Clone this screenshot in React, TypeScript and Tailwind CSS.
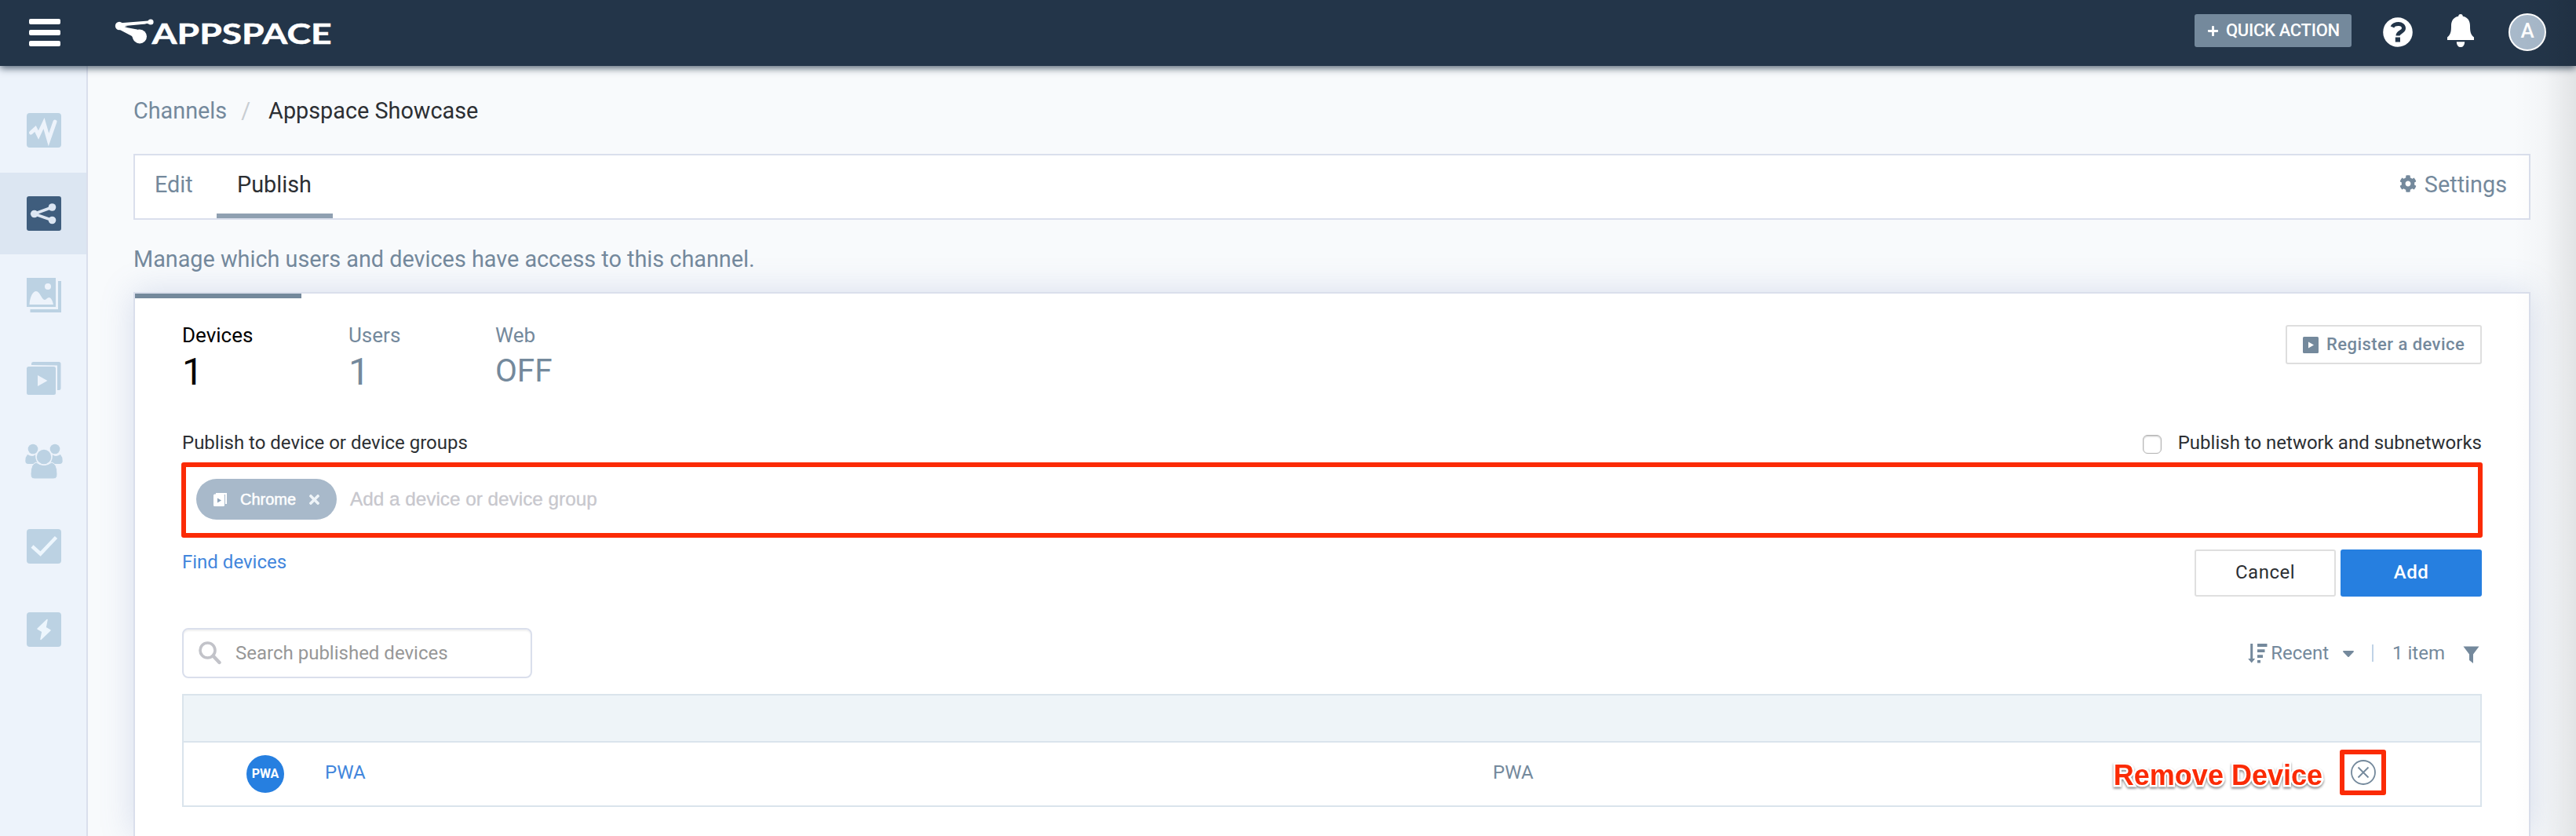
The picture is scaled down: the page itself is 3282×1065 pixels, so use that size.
import { useState } from 'react';
import type { ReactNode } from 'react';
import { FaCog, FaPlus, FaTimes, FaCaretDown } from 'react-icons/fa';

interface NavItem {
  id: string;
  icon: ReactNode;
}

interface Stat {
  id: string;
  label: string;
  value: string;
  className: string;
}

// Each icon is drawn inside a 110x104 sidebar cell
const navItems: NavItem[] = [
  {
    id: 'dashboard',
    icon: (
      <>
        <rect x="34" y="30" width="44" height="44" rx="4" fill="#bcd2e3" />
        <path d="M39.500 55 L45 50 L49 58 L56 43 L62 64 L70 41" fill="none" stroke="#edf3fb" strokeWidth="5" strokeLinecap="round" strokeMiterlimit="10" />
      </>
    ),
  },
  {
    id: 'channels',
    icon: (
      <>
        <rect x="34" y="30" width="44" height="44" rx="3" fill="#3f5d7d" />
        <path d="M66.500 44 L43.500 52.500 L66.500 60.500" fill="none" stroke="#dce6f2" strokeWidth="3.600" />
        <circle cx="66.500" cy="44" r="4.800" fill="#dce6f2" />
        <circle cx="43.800" cy="52.500" r="4.800" fill="#dce6f2" />
        <circle cx="66.500" cy="60.500" r="4.800" fill="#dce6f2" />
      </>
    ),
  },
  {
    id: 'library',
    icon: (
      <>
        <path d="M34 28h37v37H34z M74 32h4v40H38.500v-4H74z" fill="#bcd2e3" />
        <circle cx="61" cy="39" r="4" fill="#edf3fb" />
        <path d="M37.500 62 C38 52 42 45 46 45 C51 45 53 56 57 56 C59 56 60 53 62.500 53 C65 53 67 57 68 62 Z" fill="#edf3fb" />
      </>
    ),
  },
  {
    id: 'playlists',
    icon: (
      <>
        <path d="M40 33v-1.500a2.500 2.500 0 0 1 2.500-2.500H75a2.500 2.500 0 0 1 2.500 2.500V62.500a2.500 2.500 0 0 1-2.500 2.500h-2V33.500z" fill="#bcd2e3" />
        <rect x="34" y="35" width="37" height="36" rx="2.500" fill="#bcd2e3" />
        <path d="M48 46 L60.500 53 L48 60 Z" fill="#edf3fb" />
      </>
    ),
  },
  {
    id: 'users',
    icon: (
      <g fill="#bcd2e3">
        <circle cx="42" cy="34" r="6.300" />
        <circle cx="70" cy="34" r="6.300" />
        <path d="M35 41 Q42 45 45 41 L48 53 H36 Q32.300 53 32.300 49 Q32.300 44 35 41Z M77 41 Q70 45 67 41 L64 53 H76 Q79.700 53 79.700 49 Q79.700 44 77 41Z" />
        <path d="M46 51 Q56 58 66 51 Q73 53 73 66 Q73 72 68 72 H44 Q39 72 39 66 Q39 53 46 51Z" stroke="#edf3fb" strokeWidth="1" />
        <circle cx="56" cy="44" r="10" stroke="#edf3fb" strokeWidth="1.500" />
      </g>
    ),
  },
  {
    id: 'tasks',
    icon: (
      <>
        <rect x="34" y="30" width="44" height="44" rx="4" fill="#bcd2e3" />
        <path d="M41 52 L51.500 61.500 L71.500 40.500" fill="none" stroke="#edf6fd" strokeWidth="4.500" />
      </>
    ),
  },
  {
    id: 'integrations',
    icon: (
      <>
        <rect x="34" y="30" width="44" height="44" rx="4" fill="#bcd2e3" />
        <path d="M60 39.500 L48 51 L54 54.500 L52 64.500 L64 53 L58 49.500 Z" fill="#edf6fd" stroke="#edf6fd" strokeWidth="1.500" strokeLinejoin="round" />
      </>
    ),
  },
];

const stats: Stat[] = [
  { id: 'devices', label: 'Devices', value: '1', className: 'w-[212px]' },
  { id: 'users', label: 'Users', value: '1', className: 'w-[187px]' },
  { id: 'web', label: 'Web', value: 'OFF', className: 'w-[188px]' },
];

function Logo() {
  return (
    <svg className="ml-[69px]" width="278" height="84" viewBox="146 0 278 84" fill="#fff">
      <path d="M151 29.500 L192 26.300 L192 30 L159 33 L182 39 L171 52 L168 46 L149 36 Z" />
      <path d="M158.500 34.500 L176 37.800 L186 30 L192 30 Z" fill="#233549" />
      <circle cx="152" cy="33" r="5.200" />
      <circle cx="192" cy="28" r="3.600" />
      <circle cx="178" cy="46.500" r="9" />
      <text x="193.500" y="55.500" textLength="229" lengthAdjust="spacingAndGlyphs" className="font-['Lato'] text-[35.5px] font-bold" stroke="#fff" strokeWidth="0.500">
        APPSPACE
      </text>
    </svg>
  );
}

function Header() {
  return (
    <header className="relative z-10 flex h-[84px] shrink-0 items-center bg-[#233549] pl-[37px] pr-[38px] shadow-[0_3px_9px_rgba(35,53,73,0.75)]">
      <button className="flex flex-col gap-[7px] pb-px">
        <span className="h-[7px] w-10 rounded-[2px] bg-white" />
        <span className="h-[7px] w-10 rounded-[2px] bg-white" />
        <span className="h-[7px] w-10 rounded-[2px] bg-white" />
      </button>
      <Logo />
      <div className="ml-auto flex items-center pb-[3px]">
        <button className="-mt-[3px] flex h-[42px] w-[200px] items-center rounded-[3px] bg-[#74899c] pl-4 text-[22px] font-medium tracking-[-0.3px] text-white">
          <FaPlus className="mr-[9px] size-[15px]" />
          <span className="-mt-[2px] whitespace-nowrap">QUICK ACTION</span>
        </button>
        <svg className="ml-10" width="38" height="38" viewBox="0 0 38 38">
          <circle cx="19" cy="19" r="18.800" fill="#fff" />
          <path d="M12 12.500 C14 7.500 26.500 6.500 26.500 14 C26.500 19 19 18.500 19 23.500" fill="none" stroke="#233549" strokeWidth="5" />
          <rect x="15.800" y="25.500" width="6.200" height="6" fill="#233549" />
        </svg>
        <svg className="-mt-[3px] ml-[43px]" width="36" height="42" viewBox="0 0 36 42" fill="#fff">
          <path d="M18 0 C19.800 0 20.800 1.200 20.800 2.800 C27 4 30 8.500 30 15 C30 23 31 26 35 29.500 V33 H1 V29.500 C5 26 6 23 6 15 C6 8.500 9 4 15.200 2.800 C15.200 1.200 16.200 0 18 0Z" />
          <path d="M12.800 35.200 H23.200 Q23 42 18 42 Q13 42 12.800 35.200Z" />
        </svg>
        <span className="ml-[43px] flex size-12 items-center justify-center rounded-full border-2 border-white bg-[#a8b9ca] pb-[3px] text-[26px] font-medium text-white">
          A
        </span>
      </div>
    </header>
  );
}

function Sidebar() {
  return (
    <nav className="flex w-28 shrink-0 flex-col gap-[2px] border-r-2 border-[#dadfec] bg-[#edf3fb] pt-[30px]">
      {navItems.map((item) => (
        <a key={item.id} className={item.id === 'channels' ? 'bg-[#dce6f2]' : ''}>
          <svg className="block" width="110" height="104" viewBox="0 0 110 104">
            {item.icon}
          </svg>
        </a>
      ))}
    </nav>
  );
}

function DeviceField() {
  return (
    <div className="-mx-px mt-[10px] flex h-24 items-center rounded-[3px] border-6 border-[#fb2b05] pl-[13px] font-['Liberation_Sans',sans-serif]">
      <span className="-mt-[2px] flex h-[52px] w-[179px] items-center rounded-full bg-[#a8b9ca] pl-[22px] text-white">
        <svg width="17" height="17" viewBox="0 0 17 17">
          <path d="M3 0h14v14h-2V2H3z" fill="#fff" />
          <rect x="0" y="1.500" width="14" height="15.500" rx="1.500" fill="#fff" />
          <path d="M5 6.500 L10 9.500 L5 12.500Z" fill="#8fa3b8" />
        </svg>
        <span className="ml-[17px] text-xl [-webkit-text-stroke:0.5px_white]">Chrome</span>
        <FaTimes className="ml-[14px] size-[19px] text-[#eef4f8]" />
      </span>
      <span className="-mt-px ml-[17px] text-[24.3px] text-[#c7c7cd] [-webkit-text-stroke:0.3px_#c7c7cd]">
        Add a device or device group
      </span>
    </div>
  );
}

function ListControls() {
  return (
    <div className="mt-10 flex items-center justify-between">
      <div className="flex h-16 w-[446px] items-center rounded-lg border-2 border-[#dadfec] pl-[19px] shadow-[inset_0_2px_2px_rgba(0,0,0,0.06)]">
        <svg width="30" height="30" viewBox="0 0 30 30" fill="none" stroke="#c2c3c9">
          <circle cx="11.500" cy="11.500" r="9.500" strokeWidth="3.600" />
          <path d="M18.500 18.500 L26.500 27" strokeWidth="4.400" strokeLinecap="round" />
        </svg>
        <span className="ml-[17px] text-2xl text-[#979797]">Search published devices</span>
      </div>
      <div className="flex items-center pr-[3px] text-2xl text-[#74899c]">
        <svg className="mr-1" width="25" height="27" viewBox="0 0 25 27" fill="#74899c">
          <path d="M3.200 1h3v19h3L4.700 25.500 0.200 20h3z M12 1h12.500v4H12z M12 8.300h9.500v3.600H12z M12 15.300h7v3.600h-7z M12 22h4v3.500h-4z" />
        </svg>
        <span>Recent</span>
        <FaCaretDown className="ml-[13px] size-6" />
        <span className="ml-[18px] h-[22px] w-[2px] bg-[#c0d3e6]" />
        <span className="ml-[24px]">1 item</span>
        <svg className="ml-[23px] mt-1" width="21" height="22" viewBox="0 0 21 22" fill="#74899c">
          <path d="M0.500 0.500 H20.500 L13 10.500 V22 L8 18 V10.500 Z" />
        </svg>
      </div>
    </div>
  );
}

function DeviceTable() {
  return (
    <div className="mt-5 border-2 border-[#dae4ec]">
      <div className="h-[60px] border-b-2 border-[#dae4ec] bg-[#eef4f8]" />
      <div className="flex h-20 items-center pl-20 pr-[120px] text-2xl">
        <span className="flex size-12 items-center justify-center rounded-full bg-[#267fe0] text-base font-bold text-white">PWA</span>
        <a className="ml-[52px] w-[1488px] pb-1 text-[#4286dc]">PWA</a>
        <span className="pb-1 text-[#74899c]">PWA</span>
        <span className="ml-auto mr-[22px] pt-1 font-['Liberation_Sans',sans-serif] text-[36px] font-bold text-[#fb2b05] [paint-order:stroke_fill] [-webkit-text-stroke:5px_white] drop-shadow-[0_2px_1.5px_rgba(0,0,0,0.45)]">
          Remove Device
        </span>
        <button className="-mt-1 flex h-[58px] w-[59px] items-center justify-center rounded-[3px] border-6 border-[#fb2b05] bg-white">
          <svg width="34" height="34" viewBox="0 0 34 34" fill="none" stroke="#74899c" strokeWidth="1.800">
            <circle cx="17" cy="17" r="15" />
            <path d="M10.500 10.500 L23.500 23.500 M23.500 10.500 L10.500 23.500" />
          </svg>
        </button>
      </div>
    </div>
  );
}

export default function App() {
  const [activeStat] = useState('devices');

  return (
    <div className="relative flex h-[1065px] w-full flex-col overflow-hidden bg-[#f8fafc] font-['Roboto',sans-serif]">
      <Header />
      <div className="flex min-h-0 flex-1">
        <Sidebar />
        <main className="flex min-w-0 flex-1 flex-col pl-[58px] pr-[58px] pt-[38px]">
          <div className="flex h-10 items-center text-[28.8px] text-[#74899c]">
            <a>Channels</a>
            <span className="ml-[18px] text-[#c8cdd2]">/</span>
            <span className="ml-[23px] text-[#2c2f33]">Appspace Showcase</span>
          </div>

          <div className="mt-[34px] flex h-[84px] shrink-0 border-2 border-[#dadfec] bg-white text-[28.8px] text-[#74899c]">
            <a className="flex w-[104px] items-center border-b-6 border-transparent pl-[25px] pt-[2px]">Edit</a>
            <a className="flex w-[148px] items-center border-b-6 border-[#8fa0b1] pl-[26px] pt-[2px] text-[#2c2f33]">Publish</a>
            <a className="ml-auto flex items-center pb-1 pr-[28px]">
              <FaCog className="mr-[10px] mt-[-4px] size-[22px]" />
              Settings
            </a>
          </div>

          <p className="mt-[30px] h-10 shrink-0 text-[28.8px] leading-10 text-[#74899c]">
            Manage which users and devices have access to this channel.
          </p>

          <section className="mt-[22px] flex-1 border-2 border-b-0 border-[#dadfec] bg-white shadow-[0_0_40px_rgba(100,125,180,0.22)]">
            <div className="flex items-start">
              {stats.map((stat) => (
                <div
                  key={stat.id}
                  className={`${stat.className} border-t-6 pl-[60px] pt-8 ${
                    activeStat === stat.id ? 'border-[#74899c] text-black' : 'border-transparent text-[#74899c]'
                  }`}
                >
                  <div className="text-[26px] leading-[30px]">{stat.label}</div>
                  <div className={`flex h-[60px] items-center ${stat.value === 'OFF' ? 'text-[40.5px]' : 'pt-[3px] text-[48px]'}`}>
                    {stat.value}
                  </div>
                </div>
              ))}
              <button className="ml-auto mr-[60px] mt-10 flex h-[50px] w-[250px] items-center rounded-[3px] border-2 border-[#dedede] pl-5 text-[22px] font-medium text-[#74899c]">
                <svg className="mr-[10px]" width="20" height="21" viewBox="0 0 20 21">
                  <rect width="20" height="21" rx="1.500" fill="#74899c" />
                  <path d="M7 6.500 L14 10.500 L7 14.500Z" fill="#fff" />
                </svg>
                <span className="-mt-[2px] whitespace-nowrap tracking-[0.45px]">Register a device</span>
              </button>
            </div>

            <div className="pl-[60px] pr-[60px] pt-[47px]">
              <div className="flex h-[30px] items-center justify-between text-2xl text-[#2c2f33]">
                <label>Publish to device or device groups</label>
                <label className="flex items-center">
                  <span className="mr-[21px] mt-1 h-6 w-6 rounded-[6px] border border-[#b4b4b4] bg-white shadow-[inset_0_1px_2px_rgba(0,0,0,0.25)]" />
                  Publish to network and subnetworks
                </label>
              </div>

              <DeviceField />

              <div className="mt-[15px] flex h-[60px] items-start justify-between text-2xl">
                <a className="leading-[32px] text-[#4286dc]">Find devices</a>
                <div className="flex gap-[6px] tracking-[0.5px]">
                  <button className="h-[60px] w-[180px] rounded-[3px] border-2 border-[#dfdfdf] pb-[2px] text-[#2c2f33]">Cancel</button>
                  <button className="h-[60px] w-[180px] rounded-[3px] bg-[#267fe0] pb-[2px] font-medium text-white">Add</button>
                </div>
              </div>

              <ListControls />
              <DeviceTable />
            </div>
          </section>
        </main>
      </div>
      {/* shade along the window's right edge */}
      <div className="pointer-events-none absolute inset-y-0 right-0 z-20 w-20 bg-linear-to-r from-transparent via-black/2 to-black/9" />
    </div>
  );
}
